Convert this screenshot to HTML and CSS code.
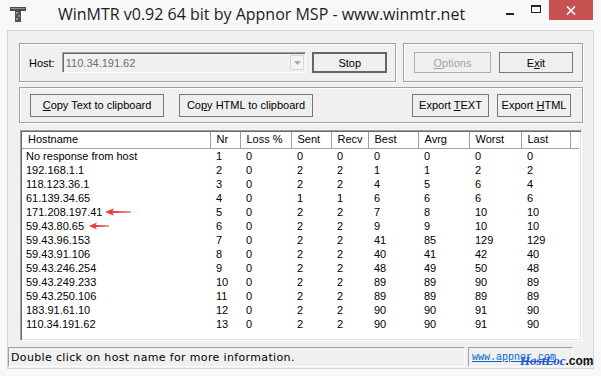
FILE: index.html
```html
<!DOCTYPE html>
<html lang="en">
<head>
  <meta charset="UTF-8">
  <title>WinMTR v0.92 64 bit by Appnor MSP - www.winmtr.net</title>
  <link rel="stylesheet" href="styles.css">
</head>
<body>

<div class="window">
  <div class="titlebar">
    <svg class="app-icon" width="16" height="15" viewBox="0 0 16 15">
      <rect x="0" y="0" width="16" height="4" fill="#4a4a4a"/>
      <rect x="1" y="1" width="14" height="1" fill="#8a8a8a"/>
      <rect x="3" y="1" width="2" height="1" fill="#c98a9a"/>
      <rect x="5" y="4" width="6" height="11" fill="#505050"/>
      <rect x="6" y="5" width="2" height="2" fill="#9a9a9a"/>
      <rect x="8" y="8" width="2" height="2" fill="#8c8c8c"/>
      <rect x="6" y="11" width="2" height="2" fill="#9a9a9a"/>
    </svg>
    <div class="title">WinMTR v0.92 64 bit by Appnor MSP - www.winmtr.net</div>
    <div class="caption">
      <div class="cap-btn"><span class="glyph-min"></span></div>
      <div class="cap-btn"><span class="glyph-max"></span></div>
      <div class="cap-btn close">
        <svg width="10" height="9" viewBox="0 0 10 9"><path d="M1 0.5 L9 8.5 M9 0.5 L1 8.5" stroke="#fff" stroke-width="1.6"/></svg>
      </div>
    </div>
  </div>

  <div class="client">
    <div class="row-top">
      <div class="group host-group">
        <span class="host-label">Host:</span>
        <div class="combo">
          <span class="combo-text">110.34.191.62</span>
          <span class="combo-drop"><svg width="7" height="4" viewBox="0 0 7 4"><path d="M0 0 H7 L3.5 4 Z" fill="#a8a8a8"/></svg></span>
        </div>
        <button class="btn btn-default btn-stop">Stop</button>
      </div>
      <div class="group option-group">
        <button class="btn btn-disabled btn-77"><u>O</u>ptions</button>
        <button class="btn btn-74">E<u>x</u>it</button>
      </div>
    </div>

    <div class="group copy-group">
      <button class="btn btn-copy"><u>C</u>opy Text to clipboard</button>
      <button class="btn btn-copy">Co<u>p</u>y HTML to clipboard</button>
      <span class="spacer"></span>
      <button class="btn btn-77">Export <u>T</u>EXT</button>
      <button class="btn btn-74">Export <u>H</u>TML</button>
    </div>

    <div class="list">
      <table class="report">
        <colgroup>
          <col class="c-host"><col class="c-nr"><col class="c-loss"><col class="c-sent"><col class="c-recv">
          <col class="c-best"><col class="c-avrg"><col class="c-worst"><col class="c-last"><col>
        </colgroup>
        <thead>
          <tr><th>Hostname</th><th>Nr</th><th>Loss %</th><th>Sent</th><th>Recv</th><th>Best</th><th>Avrg</th><th>Worst</th><th>Last</th><th></th></tr>
        </thead>
        <tbody>
          <tr><td>No response from host</td><td>1</td><td>0</td><td>0</td><td>0</td><td>0</td><td>0</td><td>0</td><td>0</td><td></td></tr>
          <tr><td>192.168.1.1</td><td>2</td><td>0</td><td>2</td><td>2</td><td>1</td><td>1</td><td>2</td><td>2</td><td></td></tr>
          <tr><td>118.123.36.1</td><td>3</td><td>0</td><td>2</td><td>2</td><td>4</td><td>5</td><td>6</td><td>4</td><td></td></tr>
          <tr><td>61.139.34.65</td><td>4</td><td>0</td><td>1</td><td>1</td><td>6</td><td>6</td><td>6</td><td>6</td><td></td></tr>
          <tr><td>171.208.197.41</td><td>5</td><td>0</td><td>2</td><td>2</td><td>7</td><td>8</td><td>10</td><td>10</td><td></td></tr>
          <tr><td>59.43.80.65</td><td>6</td><td>0</td><td>2</td><td>2</td><td>9</td><td>9</td><td>10</td><td>10</td><td></td></tr>
          <tr><td>59.43.96.153</td><td>7</td><td>0</td><td>2</td><td>2</td><td>41</td><td>85</td><td>129</td><td>129</td><td></td></tr>
          <tr><td>59.43.91.106</td><td>8</td><td>0</td><td>2</td><td>2</td><td>40</td><td>41</td><td>42</td><td>40</td><td></td></tr>
          <tr><td>59.43.246.254</td><td>9</td><td>0</td><td>2</td><td>2</td><td>48</td><td>49</td><td>50</td><td>48</td><td></td></tr>
          <tr><td>59.43.249.233</td><td>10</td><td>0</td><td>2</td><td>2</td><td>89</td><td>89</td><td>90</td><td>89</td><td></td></tr>
          <tr><td>59.43.250.106</td><td>11</td><td>0</td><td>2</td><td>2</td><td>89</td><td>89</td><td>89</td><td>89</td><td></td></tr>
          <tr><td>183.91.61.10</td><td>12</td><td>0</td><td>2</td><td>2</td><td>90</td><td>90</td><td>91</td><td>90</td><td></td></tr>
          <tr><td>110.34.191.62</td><td>13</td><td>0</td><td>2</td><td>2</td><td>90</td><td>90</td><td>91</td><td>90</td><td></td></tr>
        </tbody>
      </table>
      <svg class="arrow arrow-1" width="26" height="8" viewBox="0 0 26 8"><path d="M0 4 L9 0.3 L7.5 3 L26 3.5 L26 4.5 L7.5 5 L9 7.7 Z" fill="#ec3b3b"/></svg>
      <svg class="arrow arrow-2" width="20" height="8" viewBox="0 0 20 8"><path d="M0 4 L8 0.5 L6.5 3 L20 3.5 L20 4.5 L6.5 5 L8 7.5 Z" fill="#ec3b3b"/></svg>
    </div>

    <div class="statusbar">
      <div class="panel panel-text">Double click on host name for more information.</div>
      <div class="panel panel-link"><span class="link">www.appnor.com</span></div>
      <svg class="grip" width="11" height="11" viewBox="0 0 11 11">
        <path d="M10 2 L2 10 M10 5 L5 10 M10 8 L8 10" stroke="#a0a0a0" stroke-width="1"/>
      </svg>
      <span class="watermark"><span class="wm-host">HostLoc</span><span class="wm-com">.com</span></span>
    </div>
  </div>
</div>

</body>
</html>
```

FILE: styles.css
```css
body {
  margin: 0;
  background-color: #f7f7f7;
}

.window {
  width: 601px;
  height: 376px;
  display: flex;
  flex-direction: column;
  background-color: #f8f8f8;
  font-family: "Liberation Sans", Arial, sans-serif;
  font-size: 11px;
  color: #000;
}

/* title bar */
.titlebar {
  height: 30px;
  display: flex;
  align-items: flex-start;
  flex-shrink: 0;
}

.app-icon {
  margin: 7px 0 0 10px;
}

.title {
  flex: 1;
  text-align: center;
  font-family: "Open Sans", "Noto Sans", sans-serif;
  font-size: 16px;
  line-height: 30px;
  color: #1c1c1c;
  margin-top: -1px;
}

.caption {
  display: flex;
  margin-right: 8px;
}

.cap-btn {
  width: 26px;
  height: 20px;
  display: flex;
  align-items: center;
  justify-content: center;
}

.cap-btn.close {
  width: 44px;
  background-color: #c75050;
}

.glyph-min {
  width: 8px;
  height: 2px;
  background-color: #222;
  margin-top: 8px;
}

.glyph-max {
  width: 8px;
  height: 5px;
  border: 1px solid #222;
  border-top-width: 2px;
  margin-top: -3px;
}

/* client area */
.client {
  flex: 1;
  margin: 0 7px 7px 7px;
  border: 1px solid #d6d6d6;
  background-color: #f0f0f0;
  display: flex;
  flex-direction: column;
}

.group {
  border: 1px solid #a0a0a0;
  box-shadow: inset 1px 1px 0 #fff, 1px 1px 0 #fff;
  box-sizing: border-box;
  display: flex;
  align-items: center;
}

.row-top {
  display: flex;
  gap: 7px;
  margin: 12px 10px 0 11px;
  height: 39px;
}

.host-group {
  width: 377px;
  padding: 0 8px 0 9px;
}

.host-label {
  width: 33px;
}

.combo {
  width: 246px;
  height: 21px;
  box-sizing: border-box;
  border: 1px solid #a0a0a0;
  border-right-color: #fff;
  border-bottom-color: #fff;
  box-shadow: inset 1px 1px 0 #696969;
  display: flex;
  align-items: center;
  margin-right: 6px;
}

.combo-text {
  flex: 1;
  padding-left: 3px;
  color: #6d6d6d;
}

.combo-drop {
  width: 14px;
  height: 15px;
  margin-right: 1px;
  box-sizing: border-box;
  border: 1px solid #d6d6d6;
  background-color: #f4f4f4;
  display: flex;
  align-items: center;
  justify-content: center;
}

.btn {
  height: 21px;
  box-sizing: border-box;
  border: 1px solid #777;
  background-color: #efefef;
  font-family: "Liberation Sans", Arial, sans-serif;
  font-size: 11px;
  color: #000;
  padding: 0;
  margin: 0;
}

.btn-default {
  border: 2px solid #666;
}

.btn-stop {
  width: 75px;
}

.btn-disabled {
  border-color: #adadad;
  color: #a3a3a3;
}

.btn-77 {
  width: 77px;
}

.btn-74 {
  width: 74px;
}

.option-group {
  flex: 1;
  padding-left: 10px;
  gap: 8px;
}

.copy-group {
  margin: 5px 10px 0 11px;
  height: 36px;
  padding: 0 11px 0 10px;
  gap: 8px;
}

.copy-group .btn {
  height: 23px;
}

.btn-copy {
  width: 134px;
}

.btn-copy + .btn-copy {
  margin-left: 7px;
}

.spacer {
  flex: 1;
}

/* report list */
.list {
  position: relative;
  margin: 7px 11px 0 12px;
  height: 211px;
  box-sizing: border-box;
  border: 1px solid #a0a0a0;
  border-right-color: #fff;
  border-bottom-color: #fff;
  box-shadow: inset 1px 1px 0 #696969, inset -1px -1px 0 #e3e3e3;
  background-color: #fff;
  padding: 1px 2px 0 1px;
  overflow: hidden;
}

.report {
  width: 100%;
  table-layout: fixed;
  border-collapse: collapse;
}

.c-host { width: 188px; }
.c-nr { width: 30px; }
.c-loss { width: 51px; }
.c-sent { width: 40px; }
.c-recv { width: 37px; }
.c-best { width: 50px; }
.c-avrg { width: 51px; }
.c-worst { width: 52px; }
.c-last { width: 49px; }

.report th {
  height: 16px;
  padding: 0 0 0 6px;
  font-weight: normal;
  text-align: left;
  border-right: 1px solid #a0a0a0;
  border-bottom: 1px solid #a0a0a0;
  box-sizing: border-box;
  white-space: nowrap;
  overflow: hidden;
  line-height: 15px;
}

.report th:last-child {
  border-right: none;
}

.report td {
  height: 14px;
  padding: 0 0 0 6px;
  line-height: 14px;
  white-space: nowrap;
  overflow: hidden;
}

.report td:first-child {
  padding-left: 4px;
}

.arrow {
  position: absolute;
}

.arrow-1 {
  left: 84px;
  top: 77px;
}

.arrow-2 {
  left: 68px;
  top: 91px;
}

/* status bar */
.statusbar {
  position: relative;
  margin-top: 6px;
  height: 20px;
  display: flex;
  gap: 3px;
}

.panel {
  box-sizing: border-box;
  height: 20px;
  border: 1px solid #a0a0a0;
  border-right-color: #fff;
  border-bottom-color: #fff;
  display: flex;
  align-items: center;
}

.panel-text {
  width: 457px;
  padding-left: 2px;
  font-family: "DejaVu Sans", Tahoma, sans-serif;
  font-size: 11px;
  letter-spacing: 0.35px;
}

.panel-link {
  width: 105px;
  padding-left: 3px;
}

.link {
  font-family: "Liberation Mono", monospace;
  font-size: 10px;
  color: #0066cc;
  text-decoration: underline;
}

.grip {
  align-self: flex-end;
  margin-left: 6px;
}

.watermark {
  position: absolute;
  left: 512px;
  top: 7px;
  white-space: nowrap;
  line-height: 13px;
}

.wm-host {
  font-family: "Liberation Serif", serif;
  font-style: italic;
  font-weight: bold;
  font-size: 13px;
  color: #1f55d8;
}

.wm-com {
  font-family: "Liberation Sans", Arial, sans-serif;
  font-weight: bold;
  font-size: 12px;
  color: #111;
}
```
